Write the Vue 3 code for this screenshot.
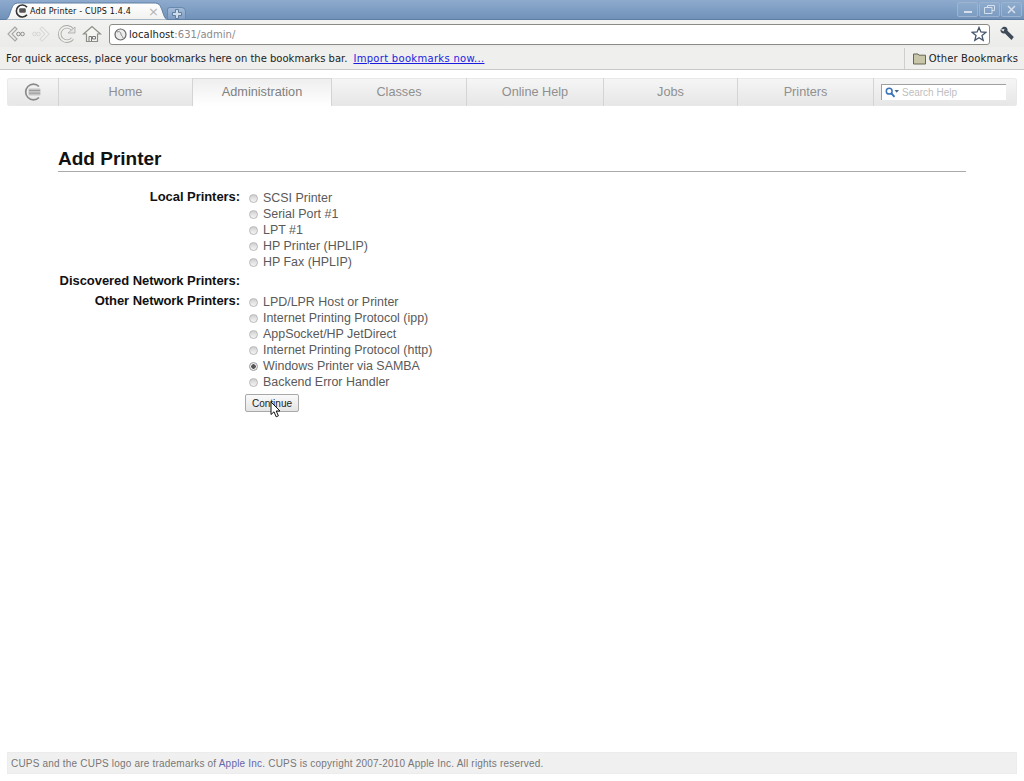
<script setup>
const localPrinters = ['SCSI Printer', 'Serial Port #1', 'LPT #1', 'HP Printer (HPLIP)', 'HP Fax (HPLIP)']
const otherPrinters = [
  { label: 'LPD/LPR Host or Printer' },
  { label: 'Internet Printing Protocol (ipp)' },
  { label: 'AppSocket/HP JetDirect' },
  { label: 'Internet Printing Protocol (http)' },
  { label: 'Windows Printer via SAMBA', on: true },
  { label: 'Backend Error Handler' }
]
const navItems = [
  { label: 'Home', w: 134 },
  { label: 'Administration', w: 139, active: true },
  { label: 'Classes', w: 135 },
  { label: 'Online Help', w: 137 },
  { label: 'Jobs', w: 134 },
  { label: 'Printers', w: 136 }
]
</script>

<template>
  <div class="page">
    <div class="titlebar">
      <div class="tab">
        <svg class="tab-shape" width="170" height="20" viewBox="0 0 170 20">
          <defs>
            <linearGradient id="tabg" x1="0" y1="0" x2="0" y2="1">
              <stop offset="0" stop-color="#ffffff" />
              <stop offset="1" stop-color="#f1f1ef" />
            </linearGradient>
          </defs>
          <path d="M3 20 C7 20 8 16 10 10 C12 5 13 3 18 3 H153 C158 3 159 5 161 10 C163 16 164 20 168 20 Z" fill="url(#tabg)" stroke="#5f7ea3" stroke-width="1" />
        </svg>
        <svg class="favicon" width="14" height="14" viewBox="0 0 14 14">
          <path d="M12 3.2 A6 6 0 1 0 12 10.8" fill="none" stroke="#333" stroke-width="1.6" />
          <rect x="4.2" y="4.2" width="6.6" height="4.6" rx="1.2" fill="#555" />
        </svg>
        <span class="tab-title">Add Printer - CUPS 1.4.4</span>
        <span class="tab-close">×</span>
      </div>
      <div class="newtab">
        <svg width="12" height="12" viewBox="0 0 12 12">
          <path d="M4.5 1.5h3v3h3v3h-3v3h-3v-3h-3v-3h3z" fill="#cfdcea" stroke="#5f7ea3" />
        </svg>
      </div>
      <div class="winbtns">
        <span class="winbtn"><i class="w-min"></i></span>
        <span class="winbtn">
          <svg width="11" height="9" viewBox="0 0 11 9">
            <path d="M3.5 2.5 V.5 H10.5 V5.5 H8 M.5 2.5 H8 V8.5 H.5 Z" fill="none" stroke="#d5e0ec" />
          </svg>
        </span>
        <span class="winbtn">
          <svg width="9" height="9" viewBox="0 0 9 9">
            <path d="M1 1 L8 8 M8 1 L1 8" fill="none" stroke="#d5e0ec" stroke-width="1.5" />
          </svg>
        </span>
      </div>
    </div>

    <div class="toolbar">
      <svg class="tool" width="21" height="20" viewBox="0 0 21 20">
        <path d="M10 3 L3 10 L10 17 L12 15 L7 10 L12 5 Z" fill="#eeeeec" stroke="#a5a7a2" stroke-width="1.1" />
        <circle cx="13.5" cy="10" r="1.8" fill="none" stroke="#8d8f8b" />
        <circle cx="17.5" cy="10" r="1.8" fill="none" stroke="#8d8f8b" />
      </svg>
      <svg class="tool" width="21" height="20" viewBox="0 0 21 20">
        <path d="M11 3 L18 10 L11 17 L9 15 L14 10 L9 5 Z" fill="#f3f3f1" stroke="#dadad7" stroke-width="1.1" />
        <circle cx="7.5" cy="10" r="1.8" fill="none" stroke="#d6d6d3" />
        <circle cx="3.5" cy="10" r="1.8" fill="none" stroke="#d6d6d3" />
      </svg>
      <svg class="tool" width="20" height="20" viewBox="0 0 20 20">
        <path d="M15.5 5.5 A7.2 7.2 0 1 0 15.5 14.5" fill="none" stroke="#a9aba6" stroke-width="3.6" />
        <path d="M15.5 5.5 A7.2 7.2 0 1 0 15.5 14.5" fill="none" stroke="#efefec" stroke-width="1.8" />
        <path d="M11 9 L18 9 L18 3 Z" fill="#e4e4e1" stroke="#a8aaa5" stroke-width=".8" />
      </svg>
      <svg class="tool" width="20" height="20" viewBox="0 0 20 20">
        <path d="M1.5 10 L10 2.5 L18.5 10 L15.5 10 V17.5 H4.5 V10 Z" fill="#f4f4f1" stroke="#8b8d87" stroke-width="1.2" />
        <path d="M7 17 V12.5 H9.5 V17 M10.5 12.5 H13.5 V15 H10.5 Z" fill="none" stroke="#777" />
      </svg>
      <div class="omnibox">
        <svg class="globe" width="13" height="13" viewBox="0 0 13 13">
          <circle cx="6.5" cy="6.5" r="5.5" fill="#ececec" stroke="#666" stroke-width="1.2" />
          <path d="M3 4 C5 3 7 4 7 6 C7 8 9 8 9 10" fill="none" stroke="#888" />
        </svg>
        <span class="host">localhost</span><span class="rest">:631/admin/</span>
        <svg class="star" width="16" height="16" viewBox="0 0 16 16">
          <path d="M8 1.5 L9.9 6 L14.8 6.4 L11 9.6 L12.2 14.4 L8 11.8 L3.8 14.4 L5 9.6 L1.2 6.4 L6.1 6 Z" fill="#fff" stroke="#44546a" stroke-width="1.3" />
        </svg>
      </div>
      <svg class="wrench" width="16" height="16" viewBox="0 0 16 16">
        <path d="M1.5 3.5 L4 1 C7 0 9 2 8.5 4.8 L14.8 11 L12.5 14 L6 7.5 C3.5 8 1 6 1.5 3.5 Z M1.5 3.5 L4.5 5.5 L5.5 3 Z" fill="#3f4a58" />
      </svg>
    </div>

    <div class="bookmarks">
      <span class="bm-text">For quick access, place your bookmarks here on the bookmarks bar.</span>
      <a class="bm-link">Import bookmarks now...</a>
      <div class="bm-other">
        <svg width="13" height="13" viewBox="0 0 13 13">
          <path d="M.5 12 V2 H5 L6 3.2 H12.5 V12 Z" fill="#c7c6a8" stroke="#666655" />
        </svg>
        <span>Other Bookmarks</span>
      </div>
    </div>

    <nav class="nav">
      <div class="nav-logo">
        <svg width="17" height="18" viewBox="0 0 17 18">
          <path d="M15 3.5 A7.8 7.8 0 1 0 15 14.5" fill="none" stroke="#8a8a8a" stroke-width="1.7" />
          <rect x="4.5" y="5.5" width="12" height="7" rx="1" fill="#c4c4c4" />
          <path d="M5 7.5 H16 M5 10.2 H16" stroke="#9b9b9b" stroke-width="1" />
        </svg>
      </div>
      <a
        v-for="item in navItems"
        :key="item.label"
        class="nav-item"
        :class="{ active: item.active }"
        :style="{ width: item.w + 'px' }"
      >{{ item.label }}</a>
      <div class="nav-search">
        <div class="search-box">
          <svg width="14" height="11" viewBox="0 0 14 11">
            <circle cx="4.2" cy="4.2" r="2.9" fill="#fff" stroke="#3b73b9" stroke-width="1.5" />
            <path d="M6.5 6.5 L9.5 9.8" stroke="#3b73b9" stroke-width="1.9" />
            <path d="M9.5 3 H14 L11.7 5.8 Z" fill="#44668c" />
          </svg>
          <span>Search Help</span>
        </div>
      </div>
    </nav>

    <main class="main">
      <h2 class="title">Add Printer</h2>
      <div class="form">
        <div class="label">Local Printers:</div>
        <div class="options">
          <label v-for="p in localPrinters" :key="p" class="opt"><i class="radio"></i>{{ p }}</label>
        </div>
        <div class="label">Discovered Network Printers:</div>
        <div class="options empty"></div>
        <div class="label">Other Network Printers:</div>
        <div class="options">
          <label v-for="p in otherPrinters" :key="p.label" class="opt"><i class="radio" :class="{ on: p.on }"></i>{{ p.label }}</label>
          <div class="btn-row">
            <button class="continue" type="button">Continue</button>
            <svg class="cursor" width="12" height="17" viewBox="0 0 12 17">
              <path d="M1 1 V13.5 L4 10.8 L6.2 15.8 L8.4 14.8 L6.2 10 H10 Z" fill="#fff" stroke="#111" stroke-width="1" />
            </svg>
          </div>
        </div>
      </div>
    </main>

    <footer class="footer">
      CUPS and the CUPS logo are trademarks of <a>Apple Inc.</a> CUPS is copyright 2007-2010 Apple Inc. All rights reserved.
    </footer>
  </div>
</template>

<style>
html, body { margin: 0; background: #fff; }
</style>

<style scoped>
.page {
  height: 781px;
  display: flex;
  flex-direction: column;
  font-family: "Liberation Sans", Arial, sans-serif;
  overflow: hidden;
  background: #fff;
}
.titlebar {
  height: 20px;
  flex: none;
  position: relative;
  display: flex;
  align-items: flex-end;
  background: linear-gradient(#8eabce, #6f90b8);
  box-shadow: inset 0 -1px 0 #5f7ea3;
}
.tab {
  position: relative;
  width: 166px;
  height: 20px;
  margin-left: 1px;
  flex: none;
  display: flex;
  align-items: center;
  padding-top: 2px;
  box-sizing: border-box;
}
.tab-shape { position: absolute; left: 0; top: 0; }
.favicon { position: relative; margin-left: 14px; flex: none; }
.tab-title {
  position: relative;
  margin-left: 1px;
  font: 8px "DejaVu Sans", sans-serif;
  letter-spacing: 0.17px;
  color: #111;
  white-space: nowrap;
}
.tab-close {
  position: relative;
  margin-left: auto;
  margin-right: 8px;
  color: #b5b5b5;
  font: 13px "DejaVu Sans", sans-serif;
}
.newtab {
  width: 19px;
  height: 12px;
  margin-bottom: 1px;
  display: flex;
  align-items: center;
  justify-content: center;
  background: linear-gradient(#a4bcd8, #7f9dc2);
  border: 1px solid #6a89ae;
  border-bottom: 0;
  border-radius: 3px 5px 0 0;
  box-sizing: border-box;
}
.winbtns {
  margin-left: auto;
  align-self: flex-start;
  margin-top: 2px;
  margin-right: 2px;
  display: flex;
  gap: 1px;
}
.winbtn {
  width: 19px;
  height: 13px;
  border: 1px solid #9db4d0;
  border-radius: 2px;
  background: linear-gradient(#8dabcd, #7c9cc1);
  display: flex;
  align-items: center;
  justify-content: center;
}
.w-min { width: 8px; height: 2px; background: #d5e0ec; margin-top: 5px; }
.toolbar {
  height: 27px;
  flex: none;
  display: flex;
  align-items: center;
  background: linear-gradient(#f2f2f0, #ebebe9);
  padding: 1px 0 0 5px;
  box-sizing: border-box;
}
.tool { flex: none; margin-right: 5px; }
.omnibox {
  margin-left: 2px;
  width: 881px;
  height: 21px;
  flex: none;
  background: #fff;
  border: 1px solid #8b8b85;
  border-radius: 3px;
  box-sizing: border-box;
  display: flex;
  align-items: center;
  padding-left: 4px;
  font: 10px "DejaVu Sans", sans-serif;
  letter-spacing: 0.05px;
}
.globe { margin-right: 2px; flex: none; }
.host { color: #222; }
.rest { color: #8a8a8a; }
.star { margin-left: auto; margin-right: 2px; }
.wrench { margin-left: 9px; flex: none; }
.bookmarks {
  height: 23px;
  flex: none;
  display: flex;
  align-items: center;
  background: #efefed;
  border-bottom: 1px solid #c8c8c6;
  box-sizing: border-box;
  padding-left: 6px;
  font: 10px "DejaVu Sans", sans-serif;
  color: #222;
}
.bm-link { margin-left: 6px; color: #1c1ce0; text-decoration: underline; letter-spacing: 0.3px; }
.bm-other {
  margin-left: auto;
  height: 21px;
  border-left: 1px solid #cfcfcc;
  padding: 0 6px 0 8px;
  display: flex;
  align-items: center;
  gap: 3px;
  letter-spacing: 0.12px;
}
.nav {
  margin: 8px 7px 0;
  height: 28px;
  flex: none;
  display: flex;
  background: linear-gradient(#f6f6f6, #e6e6e6);
  border-radius: 3px;
  box-shadow: inset 0 0 0 1px #e9e9e9;
}
.nav-logo {
  width: 51px;
  flex: none;
  display: flex;
  align-items: center;
  justify-content: center;
  box-sizing: border-box;
}
.nav-item {
  flex: none;
  display: flex;
  align-items: center;
  justify-content: center;
  box-sizing: border-box;
  border-left: 1px solid #d4d4d4;
  font-size: 12.7px;
  color: #909090;
}
.nav-item.active {
  background: linear-gradient(#eeeeee, #ffffff);
  box-shadow: inset 0 1px 0 #d9d9d9;
  color: #808080;
}
.nav-search {
  flex: 1;
  border-left: 1px solid #d4d4d4;
  display: flex;
  align-items: center;
  padding-left: 7px;
}
.search-box {
  width: 125px;
  height: 16px;
  background: #fff;
  border-top: 1px solid #a0a0a0;
  border-left: 1px solid #a0a0a0;
  box-sizing: border-box;
  display: flex;
  align-items: center;
  padding-left: 3px;
  gap: 3px;
  font-size: 10px;
  color: #c0c0c0;
}
.main {
  flex: 1;
  padding: 0 58px;
}
.title {
  margin: 42px 0 0;
  height: 23px;
  font-size: 19px;
  line-height: 22px;
  font-weight: bold;
  color: #111;
  border-bottom: 1px solid #aaa;
}
.form {
  margin-top: 17px;
  display: grid;
  grid-template-columns: 182px auto;
  justify-content: start;
}
.label {
  text-align: right;
  font-size: 13px;
  font-weight: bold;
  color: #111;
  line-height: 16px;
  white-space: nowrap;
  padding-bottom: 3px;
  letter-spacing: -0.06px;
}
.options {
  padding-left: 5px;
  padding-top: 1px;
  padding-bottom: 3px;
  font-size: 12.45px;
}
.options.empty { padding: 0; min-height: 20px; }
.opt {
  display: flex;
  align-items: center;
  height: 16px;
  color: #5a5a5a;
  white-space: nowrap;
}
.radio {
  width: 7px;
  height: 7px;
  border-radius: 50%;
  border: 1px solid #b8b8b8;
  background: linear-gradient(#d0d0d0, #f6f6f6);
  margin: 0 5px 0 4px;
  flex: none;
  box-sizing: content-box;
}
.radio.on {
  background: radial-gradient(circle, #555 0 2px, #eee 2.5px);
  border-color: #999;
}
.btn-row {
  position: relative;
  margin-top: 4px;
}
.continue {
  display: block;
  width: 54px;
  height: 18px;
  padding: 0;
  border: 1px solid #a8a8a8;
  border-radius: 2px;
  background: linear-gradient(#fafafa, #e4e4e4);
  font: 10px "Liberation Sans", sans-serif;
  color: #222;
}
.cursor { position: absolute; left: 25px; top: 7px; }
.footer {
  margin: 0 7px 7px;
  height: 22px;
  flex: none;
  background: #f0f0f0;
  border: 1px solid #ececec;
  box-sizing: border-box;
  padding-left: 3px;
  font-size: 10px;
  letter-spacing: 0.2px;
  line-height: 21px;
  color: #777;
}
.footer a { color: #66a; }
</style>
